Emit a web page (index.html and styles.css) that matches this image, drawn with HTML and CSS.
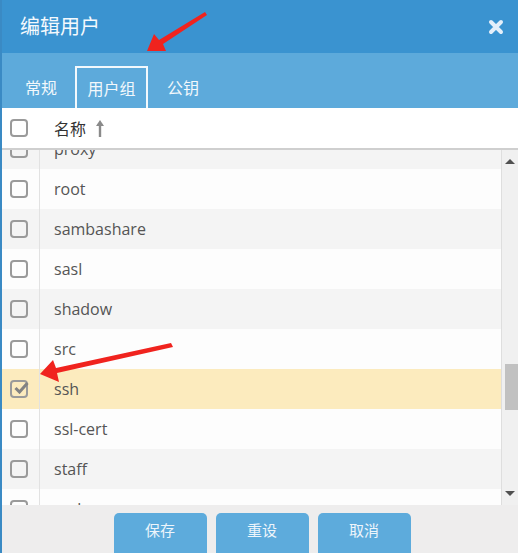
FILE: index.html
```html
<!DOCTYPE html>
<html lang="zh-CN">
<head>
    <meta charset="UTF-8">
    <meta name="viewport" content="width=device-width, initial-scale=1.0">
    <link rel="stylesheet" href="styles.css">
    <title>编辑用户</title>
</head>
<body>
    <div class="dialog">
        <header class="titlebar">
            <h1>编辑用户</h1>
            <svg class="close" width="16" height="16" viewBox="0 0 16 16">
                <path d="M3 3 L13 13 M13 3 L3 13" stroke="#e4effa" stroke-width="4" stroke-linecap="round"/>
            </svg>
        </header>
        <nav class="tabs">
            <span class="tab">常规</span>
            <span class="tab active">用户组</span>
            <span class="tab">公钥</span>
        </nav>
        <div class="grid-head">
            <span class="cell-check"><span class="box"></span></span>
            <span class="cell-name">名称</span>
            <svg class="sort" width="10" height="19" viewBox="0 0 10 19">
                <path d="M5 18 L5 4" stroke="#8a8a8a" stroke-width="2.4"/>
                <path d="M1 7 L5 1 L9 7 Z" fill="#8a8a8a"/>
            </svg>
        </div>
        <div class="grid-body">
            <div class="rows">
                <div class="row"><span class="cell-check"><span class="box"></span></span><span class="cell-name">proxy</span></div>
                <div class="row"><span class="cell-check"><span class="box"></span></span><span class="cell-name">root</span></div>
                <div class="row"><span class="cell-check"><span class="box"></span></span><span class="cell-name">sambashare</span></div>
                <div class="row"><span class="cell-check"><span class="box"></span></span><span class="cell-name">sasl</span></div>
                <div class="row"><span class="cell-check"><span class="box"></span></span><span class="cell-name">shadow</span></div>
                <div class="row"><span class="cell-check"><span class="box"></span></span><span class="cell-name">src</span></div>
                <div class="row selected"><span class="cell-check"><span class="box checked">
                    <svg width="15" height="13" viewBox="0 0 15 13"><path d="M1.5 7 L5.5 11 L13.5 2" fill="none" stroke="#828282" stroke-width="3"/></svg>
                </span></span><span class="cell-name">ssh</span></div>
                <div class="row"><span class="cell-check"><span class="box"></span></span><span class="cell-name">ssl-cert</span></div>
                <div class="row"><span class="cell-check"><span class="box"></span></span><span class="cell-name">staff</span></div>
                <div class="row"><span class="cell-check"><span class="box"></span></span><span class="cell-name">sudo</span></div>
            </div>
            <div class="scrollbar">
                <span class="arrow up"></span>
                <span class="track"><span class="thumb"></span></span>
                <span class="arrow down"></span>
            </div>
        </div>
        <footer class="buttons">
            <button>保存</button>
            <button>重设</button>
            <button>取消</button>
        </footer>

        <!-- annotation arrows -->
        <svg class="mark mark-top" width="70" height="45" viewBox="0 0 70 45">
            <path d="M60 2 L62 5 L18 34 L21 41 L2 41 L9 24 L14 30 Z" fill="#f0231e"/>
        </svg>
        <svg class="mark mark-row" width="140" height="48" viewBox="0 0 140 48">
            <path d="M135 4 L137 8 L21 34 L23 43 L4 35 L17 21 L20 29 Z" fill="#f0231e"/>
        </svg>
    </div>
</body>
</html>
```

FILE: styles.css
```css
/* Global */
body {
    margin: 0;
    padding: 0;
    font-family: 'Open Sans', 'Noto Sans CJK SC', sans-serif;
    background-color: #ffffff;
}

.dialog {
    position: relative;
    width: 518px;
    height: 553px;
    overflow: hidden;
    box-sizing: border-box;
    border-left: 2px solid #3a8ac4;
    display: flex;
    flex-direction: column;
}

/* Title bar */
.titlebar {
    height: 53px;
    flex: none;
    background-color: #3a93d0;
    display: flex;
    align-items: center;
    justify-content: space-between;
    padding: 0 14px 0 18px;
}

.titlebar h1 {
    margin: 0 0 2px;
    font-family: 'Noto Sans CJK SC', sans-serif;
    font-size: 20px;
    font-weight: normal;
    color: #f4f9fd;
}

.close {
    margin-top: 1px;
}

/* Tabs */
.tabs {
    height: 55px;
    flex: none;
    background-color: #5daadb;
    display: flex;
    align-items: flex-end;
    padding-left: 23px;
    box-sizing: border-box;
}

.tab {
    font-family: 'Noto Sans CJK SC', sans-serif;
    font-size: 16px;
    color: #f2f8fc;
    height: 42px;
    line-height: 42px;
    box-sizing: border-box;
}

.tab.active {
    width: 73px;
    margin: 0 19px 0 18px;
    border: 2px solid #f3f9fd;
    border-bottom: none;
    line-height: 40px;
    text-align: center;
}

/* Grid */
.grid-head {
    height: 40px;
    flex: none;
    display: flex;
    align-items: center;
    border-bottom: 2px solid #cfcfcf;
    background-color: #ffffff;
}

.cell-check {
    width: 38px;
    display: flex;
    align-items: center;
    padding-left: 8px;
    box-sizing: border-box;
    flex: none;
}

.box {
    width: 18px;
    height: 18px;
    box-sizing: border-box;
    border: 2px solid #9a9a9a;
    border-radius: 4px;
    display: flex;
    align-items: center;
    justify-content: center;
}

.box.checked svg {
    margin: -3px -4px 0 0;
}

.cell-name {
    padding-left: 14px;
    font-size: 16px;
    color: #555555;
}

.grid-head .cell-name {
    font-family: 'Noto Sans CJK SC', sans-serif;
    color: #333333;
}

.sort {
    margin-left: 9px;
}

.grid-body {
    height: 355px;
    flex: none;
    display: flex;
    overflow: hidden;
}

.rows {
    flex: 1;
    margin-top: -21px;
    border-right: 1px solid #dedede;
}

.row {
    height: 40px;
    display: flex;
    align-items: center;
    background-color: #f4f4f4;
}

.row:nth-child(even) {
    background-color: #fdfdfd;
}

.row.selected {
    background-color: #fcebbe;
}

.row .cell-check {
    align-self: stretch;
    border-right: 1px solid #e2e2e2;
}

.scrollbar {
    width: 16px;
    flex: none;
    background-color: #f0f0f0;
    display: flex;
    flex-direction: column;
    align-items: center;
}

.arrow {
    width: 0;
    height: 0;
    border-left: 5px solid transparent;
    border-right: 5px solid transparent;
    margin: 9px 0;
}

.arrow.up {
    border-bottom: 5px solid #505050;
}

.arrow.down {
    border-top: 5px solid #505050;
}

.track {
    flex: 1;
    width: 100%;
    display: flex;
    justify-content: flex-end;
}

.thumb {
    width: 13px;
    height: 46px;
    margin-top: 191px;
    background-color: #c1c1c1;
}

/* Footer */
.buttons {
    flex: 1;
    background-color: #eeeded;
    display: flex;
    justify-content: center;
    gap: 9px;
    padding-top: 8px;
    padding-left: 4px;
}

.buttons button {
    width: 93px;
    height: 44px;
    border: none;
    border-radius: 5px;
    background-color: #5dabdc;
    color: #edf5fb;
    font-family: 'Noto Sans CJK SC', sans-serif;
    font-size: 15px;
    padding: 0 0 12px;
}

/* Annotation arrows */
.mark {
    position: absolute;
}

.mark-top {
    left: 143px;
    top: 10px;
}

.mark-row {
    left: 34px;
    top: 339px;
}
```
